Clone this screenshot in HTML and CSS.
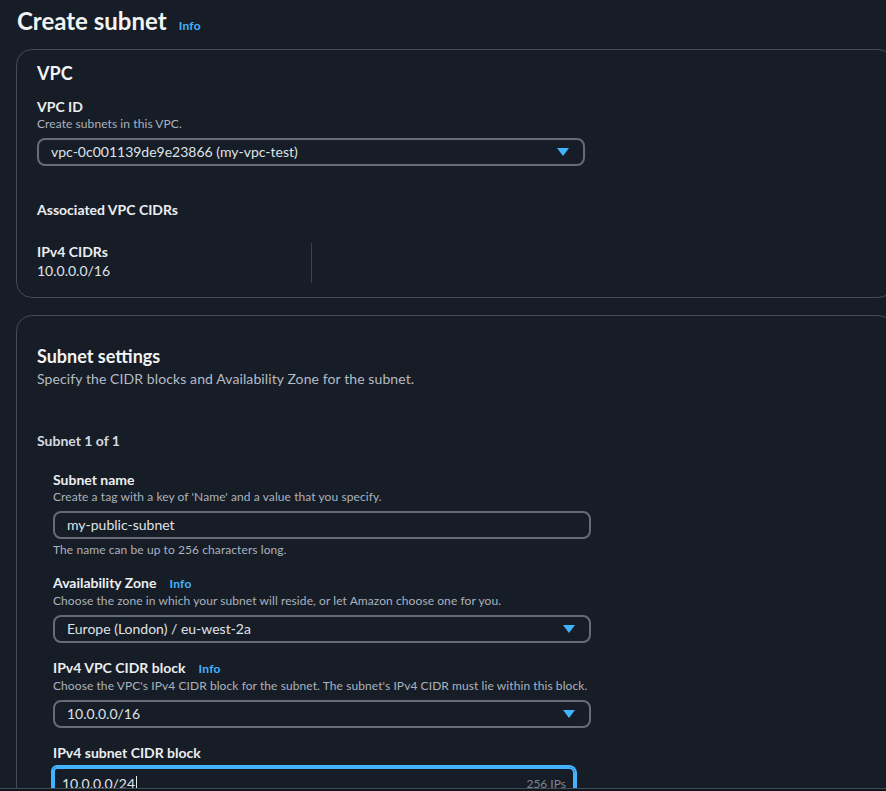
FILE: index.html
```html
<!DOCTYPE html>
<html lang="en">
<head>
<meta charset="utf-8">
<title>Create subnet</title>
<link rel="stylesheet" href="styles.css">
</head>
<body>
<div class="page">
  <header class="page-header">
    <h1 class="page-title">Create subnet</h1>
    <a class="info-link" href="#">Info</a>
  </header>

  <section class="card card-vpc">
    <h2 class="card-title">VPC</h2>
    <div class="field">
      <div class="label">VPC ID</div>
      <div class="desc">Create subnets in this VPC.</div>
      <div class="select select-wide">
        <span class="select-value">vpc-0c001139de9e23866 (my-vpc-test)</span>
        <span class="caret"></span>
      </div>
    </div>
    <div class="assoc-title">Associated VPC CIDRs</div>
    <div class="kv-grid">
      <div class="kv-col">
        <div class="kv-key">IPv4 CIDRs</div>
        <div class="kv-value">10.0.0.0/16</div>
      </div>
      <div class="kv-col"></div>
    </div>
  </section>

  <section class="card card-subnet">
    <h2 class="card-title">Subnet settings</h2>
    <div class="card-desc">Specify the CIDR blocks and Availability Zone for the subnet.</div>
    <div class="subnet-count">Subnet 1 of 1</div>
    <div class="subnet-fields">
      <div class="field">
        <div class="label">Subnet name</div>
        <div class="desc">Create a tag with a key of 'Name' and a value that you specify.</div>
        <div class="input"><span class="input-value">my-public-subnet</span></div>
        <div class="constraint">The name can be up to 256 characters long.</div>
      </div>
      <div class="field">
        <div class="label">Availability Zone <a class="info-link info-small" href="#">Info</a></div>
        <div class="desc">Choose the zone in which your subnet will reside, or let Amazon choose one for you.</div>
        <div class="select"><span class="select-value">Europe (London) / eu-west-2a</span><span class="caret"></span></div>
      </div>
      <div class="field">
        <div class="label">IPv4 VPC CIDR block <a class="info-link info-small" href="#">Info</a></div>
        <div class="desc">Choose the VPC's IPv4 CIDR block for the subnet. The subnet's IPv4 CIDR must lie within this block.</div>
        <div class="select"><span class="select-value">10.0.0.0/16</span><span class="caret"></span></div>
      </div>
      <div class="field">
        <div class="label">IPv4 subnet CIDR block</div>
        <div class="input input-focused">
          <span class="input-value">10.0.0.0/24<span class="cursor"></span></span>
          <span class="input-suffix">256 IPs</span>
        </div>
      </div>
    </div>
  </section>
</div>
<div class="bottom-edge"></div>
</body>
</html>
```

FILE: styles.css
```css
* { box-sizing: border-box; }

html, body {
  margin: 0;
  padding: 0;
  background: #171d27;
  overflow: hidden;
  height: 791px;
}

body {
  font-family: Lato, "Open Sans", sans-serif;
  color: #e9ebed;
  font-size: 14px;
  line-height: 18px;
}

.page {
  padding-left: 16px;
  width: 910px;
}

.page-header {
  display: flex;
  align-items: baseline;
  gap: 12px;
  height: 49px;
  padding: 6px 0 0 1px;
}

.page-title {
  margin: 0;
  font-size: 24px;
  line-height: 30px;
  font-weight: 700;
  color: #f2f3f3;
}

.info-link {
  color: #42b4ff;
  font-size: 12px;
  font-weight: 700;
  letter-spacing: 0.3px;
  text-decoration: none;
}

.info-small {
  margin-left: 13px;
}

.card {
  width: 878px;
  border: 1px solid #454b56;
  border-radius: 16px;
  padding: 0 20px;
}

.card-vpc {
  padding-top: 12px;
  padding-bottom: 15px;
  height: 249px;
}

.card-subnet {
  margin-top: 17px;
  padding-top: 29px;
  height: 520px;
}

.card-title {
  margin: 0;
  font-size: 18px;
  line-height: 22px;
  font-weight: 700;
  color: #f2f3f3;
}

.card-desc {
  margin-top: 3px;
  color: #b4bbc5;
  font-size: 14px;
  line-height: 18px;
  letter-spacing: 0.1px;
}

.field {
  display: flex;
  flex-direction: column;
}

.card-vpc .field {
  margin-top: 14px;
}

.label {
  font-size: 14px;
  line-height: 18px;
  font-weight: 700;
  color: #eceef0;
}

.desc,
.constraint {
  font-size: 12px;
  line-height: 16px;
  color: #aab2bd;
  letter-spacing: 0.08px;
}

.desc {
  margin-bottom: 6px;
}

.constraint {
  margin-top: 3px;
}

.select,
.input {
  display: flex;
  align-items: center;
  justify-content: space-between;
  height: 28px;
  border: 2px solid #656c77;
  border-radius: 8px;
  padding: 0 14px 0 12px;
  color: #dfe3e8;
  font-size: 14px;
  width: 538px;
}

.select-wide {
  width: 548px;
}

.caret {
  width: 0;
  height: 0;
  border-left: 6px solid transparent;
  border-right: 6px solid transparent;
  border-top: 8px solid #42b4ff;
}

.assoc-title {
  margin-top: 35px;
  font-weight: 700;
  color: #eceef0;
}

.kv-grid {
  margin-top: 24px;
  display: grid;
  grid-template-columns: 275px 1fr;
}

.kv-col:first-child {
  border-right: 1px solid #3d434d;
  padding-bottom: 2px;
}

.kv-key {
  font-weight: 700;
  color: #eceef0;
}

.kv-value {
  line-height: 20px;
  color: #dfe3e8;
}

.subnet-count {
  margin-top: 44px;
  font-weight: 700;
  color: #d5dae0;
}

.subnet-fields {
  padding-left: 16px;
  margin-top: 21px;
  display: flex;
  flex-direction: column;
  gap: 16px;
}

.subnet-fields .label {
  display: flex;
  align-items: baseline;
}

.input-focused {
  margin-top: 5px;
  width: 522px;
  border-color: #42b4ff;
  box-shadow: 0 0 0 2px #42b4ff;
  border-radius: 4px 6px 0 0;
  padding: 0 7px 0 7px;
  height: 34px;
}

.input-value {
  display: inline-flex;
  align-items: center;
}

.cursor {
  display: inline-block;
  width: 1px;
  height: 17px;
  background: #e9ebed;
  margin-left: 1px;
}

.input-suffix {
  color: #7d8693;
  font-size: 12px;
}

.bottom-edge {
  position: fixed;
  left: 0;
  right: 0;
  bottom: 0;
  height: 3px;
  background: #11161d;
  border-top: 1px solid #444a53;
}
```
